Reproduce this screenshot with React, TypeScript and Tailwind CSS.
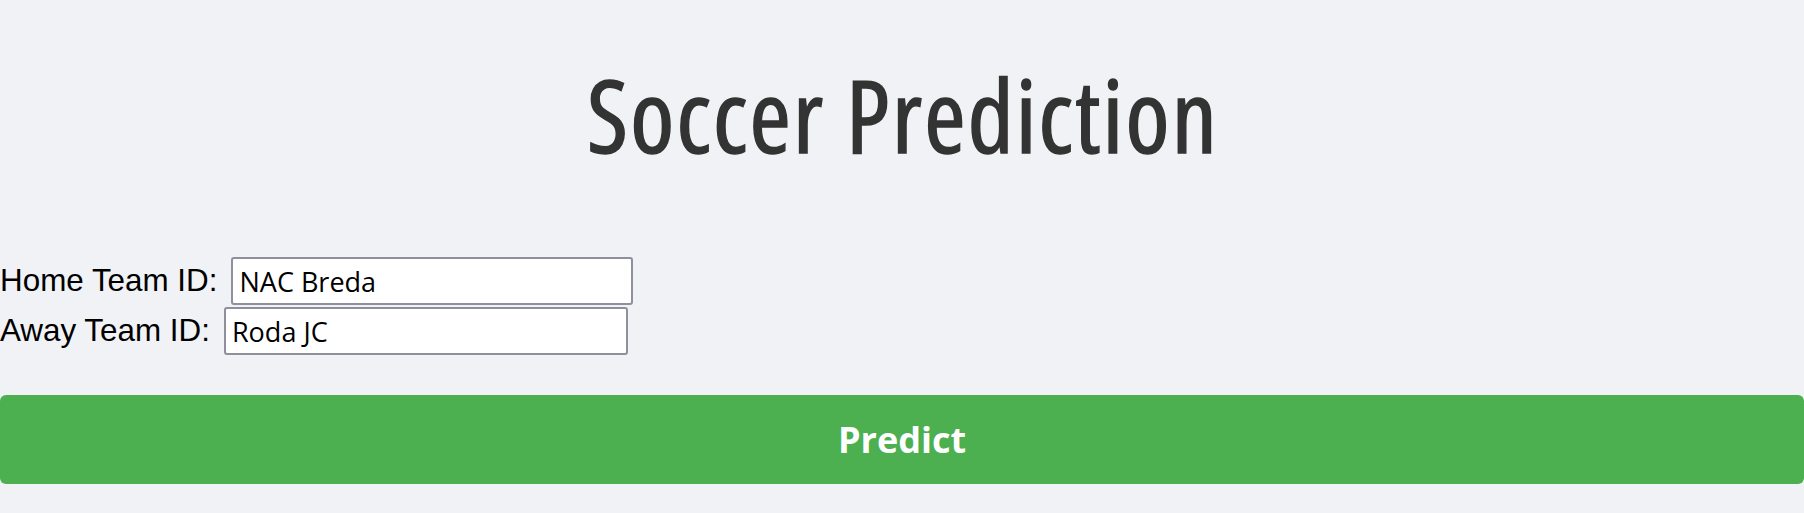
import React, { useState } from 'react';

const App: React.FC = () => {
  const [home, setHome] = useState('NAC Breda');
  const [away, setAway] = useState('Roda JC');

  return (
    <div className="min-h-[513px] w-full bg-[#f0f2f5]">
      {/* no medium condensed face installed, so thicken the regular one a little */}
      <h1 className="pt-[46px] pl-[2px] text-center font-['Open_Sans',sans-serif] font-stretch-condensed text-[100px] font-normal leading-[136px] tracking-[2.2px] text-[#333333] [-webkit-text-stroke:1.4px_#333333]">
        Soccer Prediction
      </h1>

      <form className="mt-[75px] flex flex-col" onSubmit={(e) => e.preventDefault()}>
        <div className="flex flex-col gap-[2px]">
          <div className="flex items-center">
            <label className="font-['Liberation_Sans',Arial,sans-serif] text-[31.4px] text-black">Home Team ID:</label>
            <input
              value={home}
              onChange={(e) => setHome(e.target.value)}
              className="ml-[14px] h-[48px] w-[402px] rounded-[3px] border-2 border-[#8f8f9d] bg-white px-[6px] font-['Open_Sans',sans-serif] text-[27px] text-black outline-none"
            />
          </div>
          <div className="flex items-center">
            <label className="font-['Liberation_Sans',Arial,sans-serif] text-[31.4px] text-black">Away Team ID:</label>
            <input
              value={away}
              onChange={(e) => setAway(e.target.value)}
              className="ml-[14px] h-[48px] w-[404px] rounded-[3px] border-2 border-[#8f8f9d] bg-white px-[6px] font-['Open_Sans',sans-serif] text-[27px] text-black outline-none"
            />
          </div>
        </div>

        <button
          type="submit"
          className="mt-[40px] h-[89px] w-full rounded-[6px] bg-[#4caf50] font-['Open_Sans',sans-serif] text-[36px] font-bold text-white"
        >
          Predict
        </button>
      </form>
    </div>
  );
};

export default App;
